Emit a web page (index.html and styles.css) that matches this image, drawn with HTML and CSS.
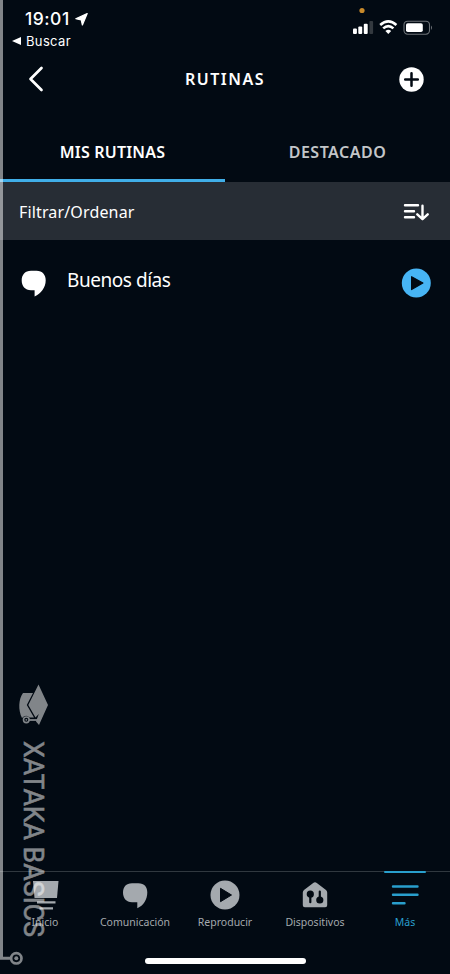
FILE: index.html
```html
<!DOCTYPE html>
<html lang="es">
<head>
<meta charset="utf-8">
<title>Rutinas</title>
<link rel="stylesheet" href="styles.css">
</head>
<body>
<div class="app">
  <div class="status">
    <div class="status-left">
      <div class="clock"><span class="time">19:01</span><svg width="13" height="13" viewBox="0 0 13 13"><path d="M12.2.6 7.4 12 6.2 6.9.8 5.7Z" fill="#fff" stroke="#fff" stroke-width="1.2" stroke-linejoin="round"/></svg></div>
      <div class="back-app"><svg width="9" height="8" viewBox="0 0 9 8"><path d="M0 4 9 0V8Z" fill="#fff"/></svg><span class="back-label">Buscar</span></div>
    </div>
    <svg class="status-icons" width="82" height="32" viewBox="0 0 82 32">
      <circle cx="11" cy="4.5" r="2.6" fill="#c98a2b"/>
      <g fill="#fff"><rect x="2" y="22.5" width="3.9" height="5.5" rx="1"/><rect x="7.3" y="20.5" width="3.9" height="7.5" rx="1"/><rect x="12.8" y="17.7" width="3.9" height="10.3" rx="1"/></g>
      <rect x="18.4" y="15" width="3.7" height="13" rx="1" fill="#33393f"/>
      <g fill="none" stroke="#fff" stroke-width="2.6"><path d="M29.2 19Q37.3 11.8 45.4 19"/><path d="M32.2 22.4Q37.3 17.8 42.4 22.4"/></g>
      <path d="M34.4 25Q37.3 22.4 40.2 25L37.3 28Z" fill="#fff"/>
      <rect x="53" y="15.2" width="25.5" height="13" rx="3.6" fill="none" stroke="#6d7277" stroke-width="1.1"/>
      <rect x="55" y="17.3" width="16.8" height="8.8" rx="1.8" fill="#fff"/>
      <path d="M80 19.5Q82 21.7 80 23.9Z" fill="#6d7277"/>
    </svg>
  </div>
  <header class="header">
    <svg width="16" height="26" viewBox="0 0 16 26"><path d="M13.5 2 2.5 13 13.5 24" fill="none" stroke="#fff" stroke-width="2.7" stroke-linecap="round" stroke-linejoin="round"/></svg>
    <h1 class="title">RUTINAS</h1>
    <svg width="25" height="25" viewBox="0 0 25 25"><circle cx="12.5" cy="12.5" r="12.2" fill="#fff"/><path d="M12.5 6.2V18.8M6.2 12.5H18.8" stroke="#020a13" stroke-width="2.5" stroke-linecap="round"/></svg>
  </header>
  <div class="tabs">
    <div class="tab tab-active"><span>MIS RUTINAS</span></div>
    <div class="tab"><span>DESTACADO</span></div>
  </div>
  <div class="filter">
    <span class="filter-label">Filtrar/Ordenar</span>
    <svg width="26" height="20" viewBox="0 0 26 20"><path d="M2 4.3H15M2 10.3H11M2 16.3H11M19.5 4.8V18M14.3 13.3 19.5 18.2 24.7 13.3" fill="none" stroke="#fff" stroke-width="2.4" stroke-linecap="round" stroke-linejoin="round"/></svg>
  </div>
  <main class="list">
    <div class="routine">
      <svg width="26" height="28" viewBox="0 0 26 28"><path d="M10 1.8H15.5C21.5 1.8 24.7 6 24.7 11.2 24.7 18.5 20 24.5 13.6 27.6V21.2H10C4 21.2.7 17 .7 11.5S4 1.8 10 1.8Z" fill="#fff"/></svg>
      <span class="routine-name">Buenos días</span>
      <svg width="30" height="30" viewBox="0 0 30 30"><circle cx="15.3" cy="15" r="14.5" fill="#47b5f5"/><path d="M10.6 8.7V21.6L21.9 15.1Z" fill="#020a13" stroke="#020a13" stroke-width="1.2" stroke-linejoin="round"/></svg>
    </div>
  </main>
  <nav class="nav">
    <div class="nav-item">
      <svg width="32" height="32" viewBox="0 0 32 32"><path d="M4 2H29.5L28 19H5.5Z" fill="#a4a9ae"/><path d="M8 23.3H26.5M10.5 29.3H24" stroke="#a4a9ae" stroke-width="2.3"/></svg>
      <span class="nav-label">Inicio</span>
    </div>
    <div class="nav-item">
      <svg width="32" height="32" viewBox="0 0 32 32"><path d="M13 4.2H19.3C25.5 4.2 28.3 8 28.3 13.5 28.3 20.5 24.5 26.5 18.3 29.3V23.2H13C7 23.2 4 19 4 13.5S7 4.2 13 4.2Z" fill="#a4a9ae"/></svg>
      <span class="nav-label">Comunicación</span>
    </div>
    <div class="nav-item">
      <svg width="32" height="32" viewBox="0 0 32 32"><circle cx="16" cy="16" r="14.5" fill="#a4a9ae"/><path d="M11.5 9.3V22.7L22.5 16Z" fill="#020a13" stroke="#020a13" stroke-width="1" stroke-linejoin="round"/></svg>
      <span class="nav-label">Reproducir</span>
    </div>
    <div class="nav-item">
      <svg width="32" height="32" viewBox="0 0 32 32"><path d="M16 3.2Q17 3.2 17.8 4L27 11Q28.2 12 28.2 13.5V26.2Q28.2 28.3 26.2 28.3H5.8Q3.8 28.3 3.8 26.2V13.5Q3.8 12 5 11L14.2 4Q15 3.2 16 3.2Z" fill="#a4a9ae"/><g fill="#020a13" stroke="#020a13" stroke-width="2.2" stroke-linecap="round"><circle cx="11.3" cy="15.2" r="2.5"/><path d="M11.3 15V23.2M20.8 12.5V21"/><circle cx="20.8" cy="21" r="2.5"/></g></svg>
      <span class="nav-label">Dispositivos</span>
    </div>
    <div class="nav-item nav-active">
      <svg width="32" height="32" viewBox="0 0 32 32"><path d="M4 7.5H28.5M4 15.8H28.5M4 24.2H15.5" stroke="#299fcd" stroke-width="2.4" stroke-linecap="round"/></svg>
      <span class="nav-label">Más</span>
    </div>
  </nav>
  <div class="home-area"><div class="home-bar"></div></div>
  <svg class="watermark" width="60" height="974" viewBox="0 0 60 974">
    <path d="M1.5 0V958.3H10" fill="none" stroke="#fff" stroke-width="3"/>
    <circle cx="16.3" cy="958.3" r="5.2" fill="none" stroke="#fff" stroke-width="2.7"/><circle cx="16.3" cy="958.3" r="2" fill="#fff"/>
    <path d="M23 693H33L26.8 705 34 717.5H29.5Q26 714 22 718C18 710 18.5 699 23 693Z" fill="#fff"/>
    <path d="M38.5 684.5 48 705 39 725 36 721.5 38.8 714 35.5 717.5 28.3 705Z" fill="#fff"/>
    <path d="M29 720H37" stroke="#fff" stroke-width="1.8"/><circle cx="26.3" cy="719.8" r="2.8" fill="#020a13" stroke="#fff" stroke-width="1.6"/><circle cx="26.3" cy="719.8" r=".9" fill="#fff"/>
    <text class="watermark-text" transform="translate(24 741) rotate(90)" textLength="196" lengthAdjust="spacingAndGlyphs">XATAKA BASICS</text>
  </svg>
</div>
</body>
</html>
```
FILE: styles.css
```css
* { box-sizing: border-box; }
body { margin: 0; background: #020a13; color: #fff; font-family: "Noto Sans", sans-serif; }
svg { display: block; flex: none; }
.app { position: relative; width: 450px; height: 974px; overflow: hidden; display: flex; flex-direction: column; }
.status { height: 54px; display: flex; justify-content: space-between; padding: 7px 17px 0 12px; font-family: Inter, sans-serif; }
.clock { display: flex; align-items: center; gap: 5px; height: 24px; padding-left: 13px; }
.time { font-size: 17.5px; font-weight: 500; line-height: 24px; letter-spacing: .5px; }
.back-app { display: flex; align-items: center; gap: 5px; height: 20px; }
.back-label { font-size: 13px; line-height: 20px; letter-spacing: .35px; }
.status-icons { margin-top: -1px; }
.header { height: 50px; display: flex; align-items: center; justify-content: space-between; padding: 0 26px 0 28px; }
.title { margin: 0 0 0 7px; font-size: 16px; font-weight: 600; line-height: 24px; letter-spacing: 1.5px; }
.tabs { height: 78px; display: grid; grid-template-columns: 1fr 1fr; }
.tab { display: flex; justify-content: center; padding-top: 36px; font-size: 16px; font-weight: 600; line-height: 24px; letter-spacing: .5px; color: #c3c6c9; border-bottom: 3px solid transparent; }
.tab-active { color: #fff; letter-spacing: .2px; border-color: #40aee8; }
.filter { height: 58px; background: #272d35; display: flex; align-items: center; justify-content: space-between; padding: 0 21px 0 19px; }
.filter-label { padding-top: 2px; font-size: 16px; letter-spacing: .15px; }
.list { flex: 1; padding-top: 28px; }
.routine { height: 30px; display: flex; align-items: center; padding: 0 19px 0 21px; }
.routine-name { flex: 1; margin: -6px 0 0 20px; font-size: 19px; letter-spacing: -.45px; }
.nav { height: 62px; border-top: 1px solid #30383f; display: grid; grid-template-columns: repeat(5, 90px); }
.nav-item { position: relative; display: flex; flex-direction: column; align-items: center; padding-top: 7px; color: #a4a9ae; }
.nav-label { font-size: 10.5px; line-height: 16px; margin-top: 3px; }
.nav-active { color: #299fcd; }
.nav-active::before { content: ""; position: absolute; top: -1px; left: 24px; width: 42px; height: 2px; background: #299fcd; border-radius: 1px; }
.home-area { height: 41px; display: flex; justify-content: center; padding-top: 25px; }
.home-bar { width: 161px; height: 6px; border-radius: 3px; background: #fff; }
.watermark { position: absolute; left: 0; top: 0; opacity: .5; }
.watermark-text { font: 27px Roboto, sans-serif; fill: #fff; stroke: #fff; stroke-width: .5px; }
```
